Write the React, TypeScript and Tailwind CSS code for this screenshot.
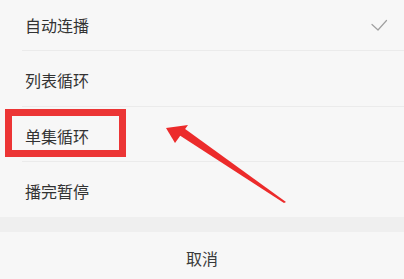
import React from 'react'

const items = ['自动连播', '列表循环', '单集循环', '播完暂停']
const heights = ['h-[51px]', 'h-[56px] pt-[2px]', 'h-[55px] pt-[3px]', 'h-[55px] pt-[3px]']

function Check() {
  return (
    <svg width="18" height="13" viewBox="0 0 18 13" fill="none">
      <path d="M2 5.5 L8 11 L16.5 1.5" stroke="#a0a0a0" strokeWidth="1.2" strokeLinecap="round" strokeLinejoin="round" />
    </svg>
  )
}

function Arrow() {
  return (
    <svg className="absolute left-0 top-0" width="404" height="279" viewBox="0 0 404 279">
      {/* tapered shaft */}
      <polygon points="176,133 181,126 286,202 284,203" fill="#ec2b2b" />
      {/* head */}
      <polygon points="166,128 188,125 175,143" fill="#ec2b2b" />
    </svg>
  )
}

export default function App() {
  return (
    <div
      className="relative h-[279px] w-full overflow-hidden bg-[#f7f7f7] text-[#333]"
      style={{ fontFamily: '"Noto Sans CJK SC", "Noto Sans", sans-serif' }}
    >
      {/* option list */}
      <div className="flex flex-col">
        {items.map((t, i) => (
          <div
            key={t}
            className={`flex items-center justify-between pl-[25px] pr-[16px] ${heights[i]} ${
              i < items.length - 1 ? 'border-b border-[#ebebeb] [border-image:linear-gradient(to_right,transparent_23px,#ebebeb_23px)_1]' : ''
            }`}
          >
            <span className="text-[16px] leading-none">{t}</span>
            {i === 0 && <Check />}
          </div>
        ))}
      </div>

      {/* spacer band */}
      <div className="h-[15px] bg-[#efefef]" />

      {/* cancel */}
      <div className="flex h-[48px] items-center justify-center pt-[4px]">
        <span className="text-[16px] leading-none text-[#3a3a3a]">取消</span>
      </div>

      {/* annotation: red frame + arrow */}
      <div className="absolute left-[5px] top-[109px] h-[48px] w-[121px] border-[7px] border-[#ec3535]" />
      <Arrow />
    </div>
  )
}
